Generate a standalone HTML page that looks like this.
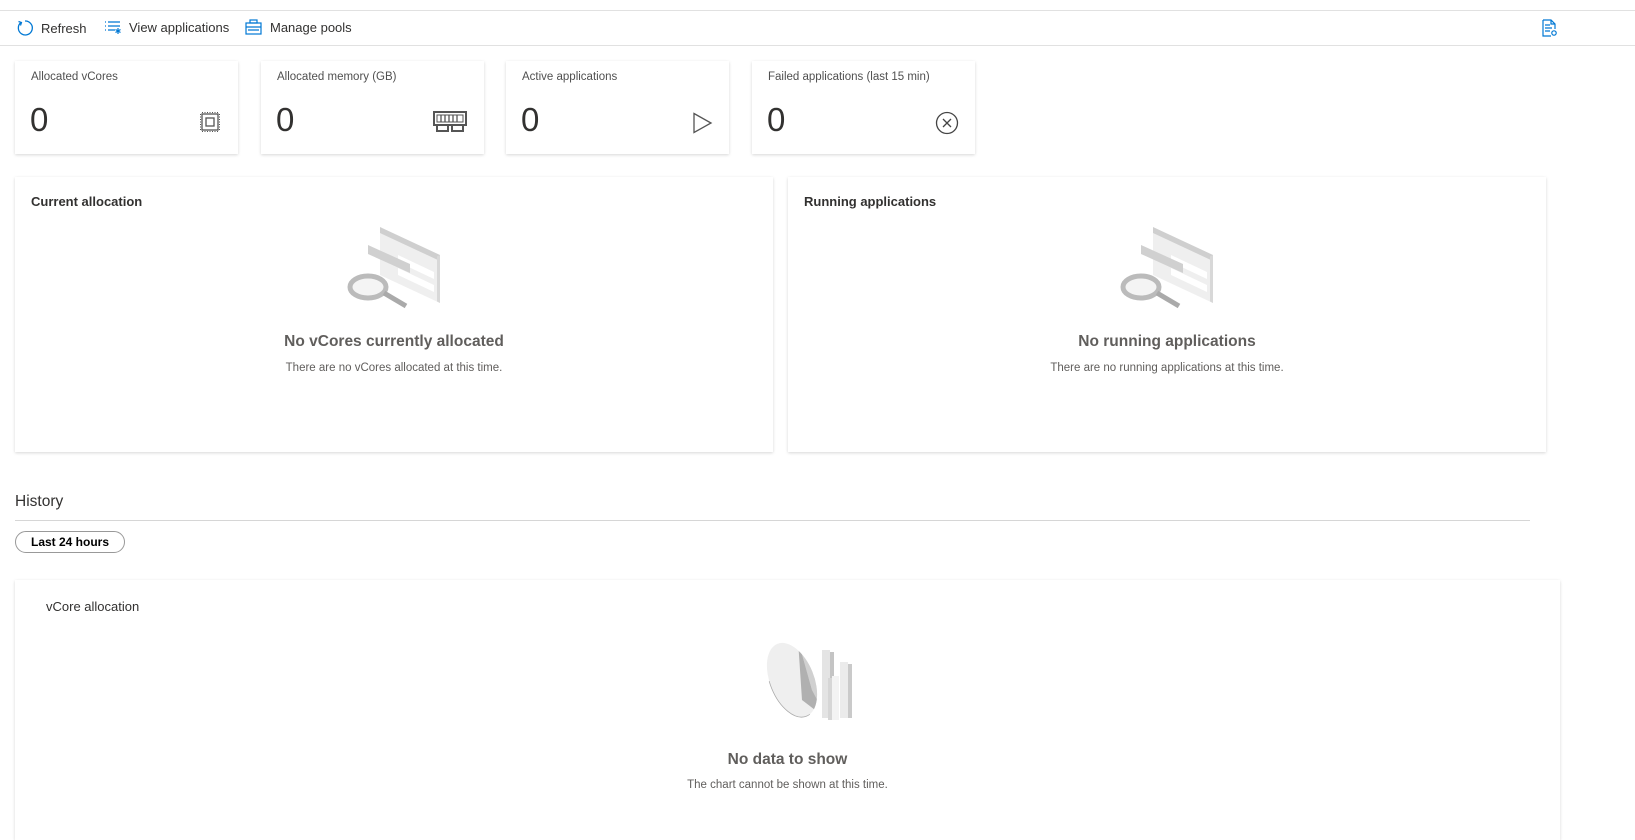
<!DOCTYPE html>
<html><head><meta charset="utf-8"><style>
*{box-sizing:border-box;margin:0;padding:0}
body{width:1635px;height:826px;overflow:hidden;background:#fff;font-family:"Liberation Sans",sans-serif;color:#323130;position:relative}
.abs{position:absolute}
.line{position:absolute;left:0;width:1635px;height:1px;background:#e1e1e1}
.tb{position:absolute;top:19px;font-size:13px;color:#323130;display:flex;align-items:center;gap:7px}
.card{position:absolute;top:61px;width:223px;height:93px;background:#fff;box-shadow:0 1px 3px rgba(0,0,0,.16)}
.card .lbl{position:absolute;left:16px;top:10px;font-size:11.5px;color:#505050}
.card .num{position:absolute;left:15px;top:40px;font-size:33px;color:#323130;font-weight:300}
.card svg{position:absolute}
.panel{position:absolute;background:#fff;box-shadow:0 1px 3px rgba(0,0,0,.16)}
.ptitle{position:absolute;left:16px;top:17px;font-size:13px;font-weight:bold;color:#323130}
.et{position:absolute;left:0;right:0;text-align:center;font-size:15.5px;font-weight:bold;color:#605e5c}
.es{position:absolute;left:0;right:0;text-align:center;font-size:11.5px;color:#605e5c}
</style></head><body>
<div class="line" style="top:10px"></div>
<div class="line" style="top:45px"></div>
<div class="tb" style="left:16px"><svg width="18" height="18" viewBox="0 0 18 18"><path d="M5 3.5A7 7 0 1 0 9 2" fill="none" stroke="#0078d4" stroke-width="1.3"/><path d="M2.5 2.5L5.5 3.5 4.5 6.5" fill="none" stroke="#0078d4" stroke-width="1.2"/></svg>Refresh</div>
<div class="tb" style="left:104px"><svg width="18" height="16" viewBox="0 0 18 16"><g stroke="#0078d4" stroke-width="1.2"><path d="M1 3h1M4 3h12M1 7h1M4 7h12M1 11h1M4 11h7"/><path d="M14 9v6M11.5 10.5l5 3M16.5 10.5l-5 3"/></g></svg>View applications</div>
<div class="tb" style="left:245px"><svg width="18" height="16" viewBox="0 0 18 16"><g fill="none" stroke="#0078d4" stroke-width="1.2"><rect x="1" y="4" width="15" height="11"/><rect x="5" y="1" width="7" height="3"/><path d="M1 8h15M3 11h11"/></g></svg>Manage pools</div>
<svg class="abs" style="left:1541px;top:19px" width="18" height="18" viewBox="0 0 18 18"><g fill="none" stroke="#0078d4" stroke-width="1.2"><path d="M2 1h8l4 4v5M2 1v16h8M10 1v4h4"/><path d="M4 6h5M4 9h7M4 12h5"/><circle cx="13" cy="14" r="2.2"/></g></svg>

<div class="card" style="left:15px"><div class="lbl">Allocated vCores</div><div class="num">0</div>
<svg style="left:184px;top:50px" width="22" height="22" viewBox="0 0 22 22"><g fill="none" stroke="#555" stroke-width="1.3"><rect x="3" y="3" width="16" height="16"/><rect x="7" y="7" width="8" height="8"/></g><g stroke="#555" stroke-dasharray="1 1.5"><path d="M3 1.5h16M3 20.5h16M1.5 3v16M20.5 3v16"/></g></svg></div>
<div class="card" style="left:261px"><div class="lbl">Allocated memory (GB)</div><div class="num">0</div>
<svg style="left:172px;top:50px" width="34" height="22" viewBox="0 0 34 22"><g fill="none" stroke="#555" stroke-width="2"><rect x="1" y="1" width="32" height="13"/><rect x="4" y="4" width="26" height="7" stroke-width="1"/><path d="M8 4v7M12 4v7M16 4v7M20 4v7M24 4v7" stroke-width="1.3"/><path d="M4 14v6h11v-6M19 14v6h11v-6"/></g></svg></div>
<div class="card" style="left:506px"><div class="lbl">Active applications</div><div class="num">0</div>
<svg style="left:186px;top:51px" width="22" height="22" viewBox="0 0 22 22"><path d="M2 1.5L19 11 2 20.5Z" fill="none" stroke="#555" stroke-width="1.3"/></svg></div>
<div class="card" style="left:752px"><div class="lbl">Failed applications (last 15 min)</div><div class="num">0</div>
<svg style="left:183px;top:50px" width="24" height="24" viewBox="0 0 24 24"><g fill="none" stroke="#444" stroke-width="1.3"><circle cx="12" cy="12" r="10.5"/><path d="M8 8l8 8M16 8l-8 8"/></g></svg></div>

<svg width="0" height="0" style="position:absolute"><defs>
<g id="mag">
<path d="M34 8l60 28v44l-60-28z" fill="#efefef"/>
<path d="M34 4l60 28v6l-60-28z" fill="#cfcfcf"/>
<path d="M94 32v48l-3 -1.5v-45z" fill="#d8d8d8"/>
<path d="M52 32l36 17v7l-36-17z" fill="#fff"/>
<path d="M52 45l36 17v7l-36-17z" fill="#fff"/>
<path d="M22 22l42 19v9l-42-19z" fill="#d0d0d0"/>
<ellipse cx="22" cy="64" rx="18" ry="11" fill="#f4f4f4" stroke="#bbb" stroke-width="5"/>
<path d="M38 70l22 13" stroke="#aaa" stroke-width="5"/>
</g>
<clipPath id="pc"><ellipse cx="30" cy="40" rx="22" ry="39" transform="rotate(-22 30 40)"/></clipPath>
<g id="pie">
<ellipse cx="30" cy="40" rx="22" ry="39" transform="rotate(-22 30 40)" fill="#efefef"/>
<g clip-path="url(#pc)"><path d="M36 0L90 0 90 90 66 80 50 50z" fill="#d0d0d0"/><path d="M36 0L50 50 66 80 40 60z" fill="#b0b0b0"/></g>
<ellipse cx="30" cy="40" rx="22" ry="39" transform="rotate(-22 30 40)" fill="none" stroke="#aaa" stroke-width="0.8" stroke-dasharray="0 45 60 200"/>
<rect x="60" y="10" width="8" height="68" fill="#e4e4e4"/><rect x="68" y="12" width="4" height="66" fill="#c4c4c4"/>
<rect x="78" y="22" width="8" height="56" fill="#ebebeb"/><rect x="86" y="24" width="4" height="54" fill="#cacaca"/>
<rect x="70" y="36" width="7" height="44" fill="#f3f3f3"/><rect x="66" y="38" width="4" height="42" fill="#d6d6d6"/>
</g></defs></svg>

<div class="panel" style="left:15px;top:177px;width:758px;height:275px"><div class="ptitle">Current allocation</div>
<svg class="abs" style="left:331px;top:46px" width="100" height="92" viewBox="0 0 100 92"><use href="#mag"/></svg>
<div class="et" style="top:156px">No vCores currently allocated</div>
<div class="es" style="top:185px">There are no vCores allocated at this time.</div></div>
<div class="panel" style="left:788px;top:177px;width:758px;height:275px"><div class="ptitle">Running applications</div>
<svg class="abs" style="left:331px;top:46px" width="100" height="92" viewBox="0 0 100 92"><use href="#mag"/></svg>
<div class="et" style="top:156px">No running applications</div>
<div class="es" style="top:185px">There are no running applications at this time.</div></div>

<div class="abs" style="left:15px;top:493px;font-size:15.5px;color:#323130">History</div>
<div class="abs" style="left:15px;top:520px;width:1515px;height:1px;background:#d6d6d6"></div>
<div class="abs" style="left:15px;top:531px;width:110px;height:22px;border:1px solid #999;border-radius:11px;font-size:12px;font-weight:bold;text-align:center;line-height:20px;color:#000">Last 24 hours</div>

<div class="panel" style="left:15px;top:580px;width:1545px;height:260px"><div class="abs" style="left:31px;top:19px;font-size:13px;color:#323130">vCore allocation</div>
<svg class="abs" style="left:747px;top:60px" width="100" height="82" viewBox="0 0 100 82"><use href="#pie"/></svg>
<div class="et" style="top:171px">No data to show</div>
<div class="es" style="top:199px">The chart cannot be shown at this time.</div></div>
</body></html>
